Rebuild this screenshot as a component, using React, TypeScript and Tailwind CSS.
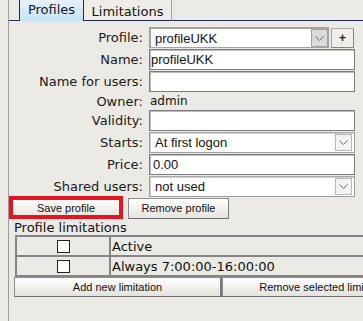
import React from "react";

const label = "text-right text-[13px] leading-none text-[#1b1b1b] [font-family:'DejaVu_Sans',sans-serif] whitespace-nowrap";
const value = "text-[13px] leading-none text-[#111] [font-family:'Liberation_Sans',Arial,sans-serif] whitespace-nowrap";
const field = "h-[21px] bg-white border border-[#7c7c7c] shadow-[inset_1px_1px_0_#bcbcbc] flex items-center";
const btn =
  "h-full border border-[#8e8e8e] border-b-[#6f6f6f] border-r-[#7a7a7a] bg-[linear-gradient(#ffffff,#f3f2ee_45%,#e3e2dc)] text-[11px] leading-none text-[#111] [font-family:'Liberation_Sans',Arial,sans-serif] flex items-center justify-center whitespace-nowrap";

function Chevron() {
  return (
    <svg width="9" height="5" viewBox="0 0 9 5">
      <path d="M0.5 0.5 L4.5 4.5 L8.5 0.5" fill="none" stroke="#6e6e6e" strokeWidth="1" />
    </svg>
  );
}

function Combo({ text }: { text: string }) {
  return (
    <div className="h-[21px] bg-white border border-[#9d9d9d] border-t-[#a9a9a9] shadow-[inset_1px_1px_0_#cfcfcf] flex items-center">
      <span className={`${value} flex-1 pl-[5px]`}>{text}</span>
      <div className="w-[17px] h-[17px] mr-[2px] bg-[#f3f3f3] border border-[#b7b7b7] flex items-center justify-center">
        <Chevron />
      </div>
    </div>
  );
}

function Check() {
  return <div className="w-[13px] h-[13px] bg-white border border-[#222]" />;
}

export default function App() {
  return (
    <div className="w-[363px] h-[321px] bg-[#ebeae4] overflow-hidden">
      <div className="ml-[8px] h-full border-l border-[#9c9c9c] flex flex-col">
        {/* Tabs */}
        <div className="h-[21px] flex items-stretch">
          <div className="w-[10px] border-b border-[#1f2a5a]" />
          <div className="w-[65px] border-x border-[#1f2a5a] bg-[linear-gradient(#e6f3fa,#c4e2f2)] flex items-start justify-center pt-[3px] text-[13px] leading-none text-[#14182a] [font-family:'DejaVu_Sans',sans-serif]">
            Profiles
          </div>
          <div className="w-[88px] border-r border-b border-r-[#a3a3a3] border-b-[#1f2a5a] bg-[#eeede8] flex items-start justify-center pt-[5px] text-[13px] leading-none text-[#111] [font-family:'DejaVu_Sans',sans-serif]">
            Limitations
          </div>
          <div className="flex-1 border-b border-[#1f2a5a]" />
        </div>

        {/* Form */}
        <div className="pt-[6px] grid grid-cols-[134px_206px] gap-x-[6px] gap-y-[1px] items-center">
          <span className={label}>Profile:</span>
          <div className="flex items-start">
            <div className="w-[180px] h-[21px] bg-white border border-[#a3a3a3] border-t-2 border-l-2 flex items-start">
              <span className={`${value} flex-1 pl-[4px] self-center`}>profileUKK</span>
              <div className="w-[17px] h-[18px] bg-[#dadada] border border-[#a2a2a2] flex items-center justify-center">
                <Chevron />
              </div>
            </div>
            <div className="ml-[2px] mt-[1px] w-[23px] h-[20px] bg-[#efeee9] border border-[#a8a8a8] border-r-[#858585] border-b-[#858585] flex items-center justify-center text-[12px] font-bold leading-none text-[#222] [font-family:'Liberation_Sans',Arial,sans-serif]">
              +
            </div>
          </div>

          <span className={label}>Name:</span>
          <div className={field}>
            <span className={`${value} pl-[1px]`}>profileUKK</span>
          </div>

          <span className={label}>Name for users:</span>
          <div className={field} />

          <span className={`${label} h-[16px] flex items-center justify-end`}>Owner:</span>
          <span className="pl-[1px] text-[12px] leading-none text-[#111] [font-family:'DejaVu_Sans',sans-serif]">admin</span>

          <span className={label}>Validity:</span>
          <div className={field} />

          <span className={label}>Starts:</span>
          <Combo text="At first logon" />

          <span className={label}>Price:</span>
          <div className={field}>
            <span className={`${value} pl-[3px]`}>0.00</span>
          </div>

          <span className={label}>Shared users:</span>
          <Combo text="not used" />
        </div>

        {/* Profile buttons */}
        <div className="mt-[1px] h-[21px] flex items-stretch">
          <div className="relative w-[114px] shrink-0">
            <div className={btn}>Save profile</div>
            <div className="absolute left-0 right-0 top-[-2px] bottom-0 border-4 border-[#e5141e]" />
          </div>
          <div className="ml-[5px] w-[101px] shrink-0">
            <div className={btn}>Remove profile</div>
          </div>
        </div>

        {/* Limitations */}
        <div className="h-[16px] pl-[5px] flex items-center text-[13px] leading-none text-[#111] [font-family:'DejaVu_Sans',sans-serif] whitespace-nowrap">
          Profile limitations
        </div>

        <div className="ml-[6px] w-[420px] shrink-0 border-t-2 border-l-2 border-[#858585] text-[13px] leading-none text-[#111] [font-family:'DejaVu_Sans',sans-serif]">
          {["Active", "Always 7:00:00-16:00:00"].map((t) => (
            <div key={t} className="h-[20px] flex border-b-2 border-[#858585]">
              <div className="w-[94px] shrink-0 border-r-2 border-[#858585] flex items-center justify-center">
                <Check />
              </div>
              <div className="pl-[1px] flex items-center whitespace-nowrap">{t}</div>
            </div>
          ))}
        </div>

        <div className="ml-[5px] h-[20px] w-[414px] flex shrink-0">
          <div className="w-[207px] shrink-0">
            <div className={btn}>Add new limitation</div>
          </div>
          <div className="w-[207px] shrink-0 border-l border-[#777]">
            <div className={btn}>Remove selected limitation</div>
          </div>
        </div>
      </div>
    </div>
  );
}
